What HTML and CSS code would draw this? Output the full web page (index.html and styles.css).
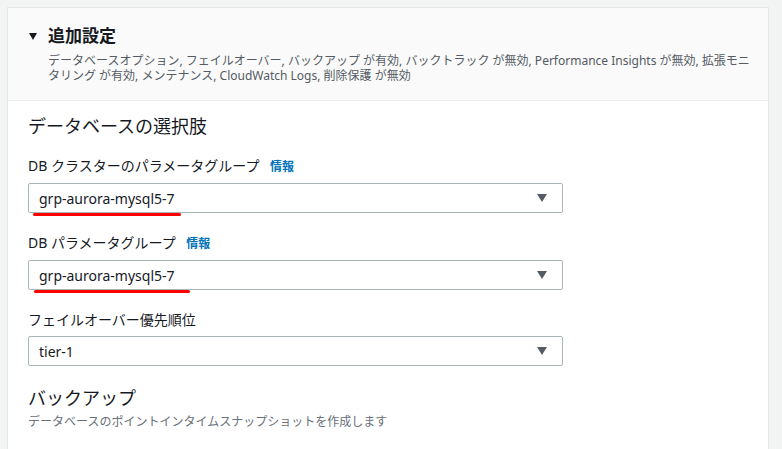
FILE: index.html
```html
<!DOCTYPE html>
<html lang="ja">
<head>
    <meta charset="UTF-8">
    <meta name="viewport" content="width=device-width, initial-scale=1.0">
    <title>追加設定</title>
    <link rel="stylesheet" href="styles.css">
</head>
<body>
    <div class="panel">
        <div class="panel-header">
            <h2 class="panel-title"><span class="caret"></span>追加設定</h2>
            <p class="panel-summary">データベースオプション, フェイルオーバー, バックアップ が有効, バックトラック が無効, Performance Insights が無効, 拡張モニタリング が有効, メンテナンス, CloudWatch Logs, 削除保護 が無効</p>
        </div>

        <div class="panel-body">
            <h3 class="section-title">データベースの選択肢</h3>

            <div class="field">
                <div class="field-label">DB クラスターのパラメータグループ <a class="info" href="#">情報</a></div>
                <div class="select">
                    <span class="select-value">grp-aurora-mysql5-7</span>
                    <span class="select-arrow"></span>
                </div>
                <span class="mark mark-cluster"></span>
            </div>

            <div class="field">
                <div class="field-label">DB パラメータグループ <a class="info" href="#">情報</a></div>
                <div class="select">
                    <span class="select-value">grp-aurora-mysql5-7</span>
                    <span class="select-arrow"></span>
                </div>
                <span class="mark mark-db"></span>
            </div>

            <div class="field">
                <div class="field-label">フェイルオーバー優先順位</div>
                <div class="select">
                    <span class="select-value">tier-1</span>
                    <span class="select-arrow"></span>
                </div>
            </div>

            <h3 class="section-title backup-title">バックアップ</h3>
            <p class="section-desc">データベースのポイントインタイムスナップショットを作成します</p>
        </div>
    </div>
</body>
</html>
```

FILE: styles.css
```css
* {
    margin: 0;
    padding: 0;
    box-sizing: border-box;
}

body {
    font-family: "Noto Sans", "Noto Sans CJK JP", sans-serif;
    background: #f2f3f3;
    color: #16191f;
    padding: 7px 13px 0 7px;
    height: 449px;
    overflow: hidden;
}

.panel {
    background: white;
    border: 1px solid #e4e7e7;
    border-bottom: none;
    min-height: 442px;
}

.panel-header {
    background: #fafafa;
    border-bottom: 1px solid #eaeded;
    padding: 17px 12px 17px 21px;
}

.panel-title {
    display: flex;
    align-items: center;
    font-size: 17px;
    font-weight: 700;
    line-height: 22px;
}

.caret {
    width: 0;
    height: 0;
    border-left: 4px solid transparent;
    border-right: 4px solid transparent;
    border-top: 7px solid #16191f;
    margin-right: 11px;
}

.panel-summary {
    margin-top: 6px;
    padding-left: 19px;
    font-size: 12px;
    line-height: 15px;
    color: #545b64;
}

.panel-body {
    padding: 13px 20px 20px 20px;
}

.section-title {
    font-size: 18px;
    font-weight: 400;
    line-height: 24px;
    margin-bottom: 18px;
}

.field {
    position: relative;
    margin-bottom: 20px;
    width: 535px;
}

.field-label {
    font-size: 14px;
    line-height: 20px;
    margin-bottom: 6px;
}

.info {
    color: #0073bb;
    font-size: 12px;
    font-weight: 700;
    text-decoration: none;
    margin-left: 7px;
}

.select {
    height: 30px;
    border: 1px solid #aab7b8;
    border-radius: 2px;
    display: flex;
    align-items: center;
    justify-content: space-between;
    padding: 0 15px 0 10px;
    font-size: 14px;
}

.select-arrow {
    width: 0;
    height: 0;
    border-left: 5px solid transparent;
    border-right: 5px solid transparent;
    border-top: 8px solid #545b64;
}

/* red annotation strokes */
.mark {
    position: absolute;
    height: 3px;
    background: #f00;
    border-radius: 2px;
    bottom: -3px;
}

.mark-cluster {
    left: 5px;
    width: 148px;
}

.mark-db {
    left: 6px;
    width: 156px;
}

.backup-title {
    margin-top: 1px;
    margin-bottom: 4px;
}

.section-desc {
    font-size: 12px;
    line-height: 16px;
    color: #687078;
}
```
